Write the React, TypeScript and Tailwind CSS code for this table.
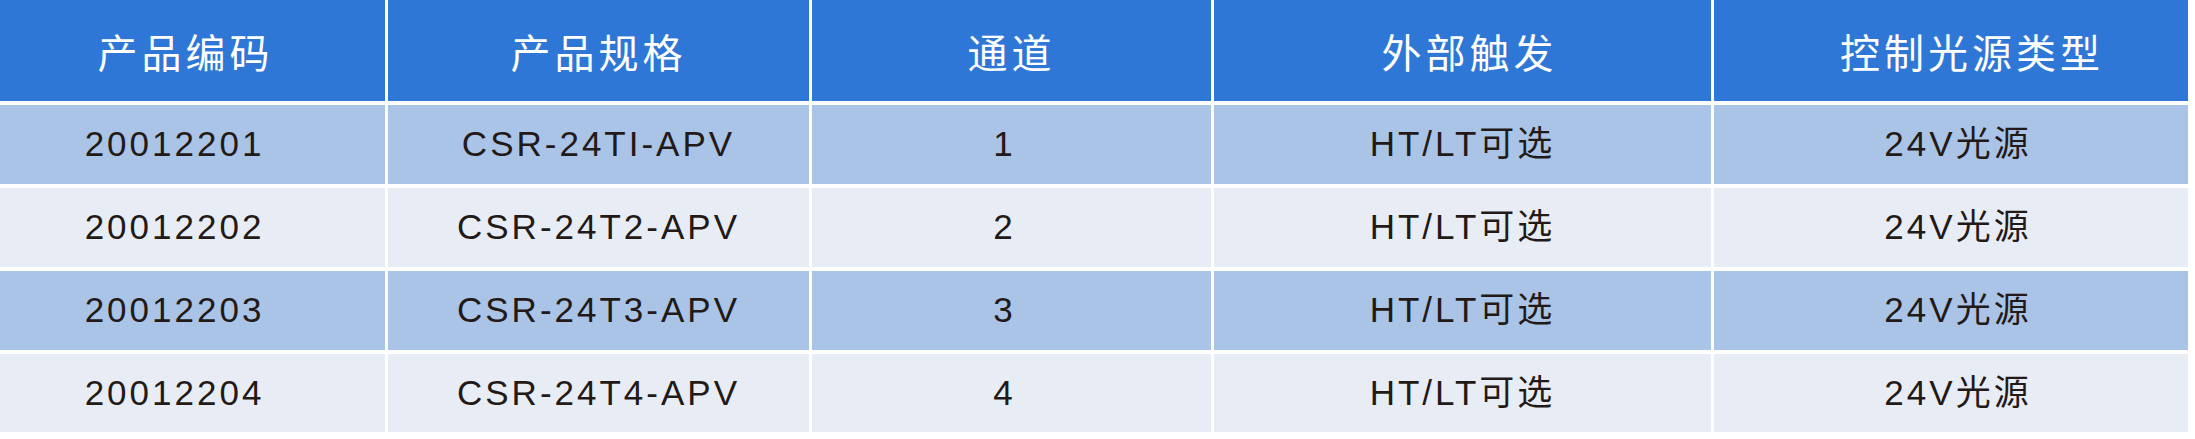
const headers = ["产品编码", "产品规格", "通道", "外部触发", "控制光源类型"];

const rows = [
  ["20012201", "CSR-24TI-APV", "1", "HT/LT可选", "24V光源"],
  ["20012202", "CSR-24T2-APV", "2", "HT/LT可选", "24V光源"],
  ["20012203", "CSR-24T3-APV", "3", "HT/LT可选", "24V光源"],
  ["20012204", "CSR-24T4-APV", "4", "HT/LT可选", "24V光源"],
];

const headPad = ["pr-[14px]", "", "", "pl-[14px]", "pl-[42px]"];
const bodyPad = ["pr-[36px]", "", "pr-[14px]", "", "pl-[14px]"];

export default function App() {
  return (
    <div
      className="w-[2195px] h-[439px] bg-white"
      style={{ fontFamily: '"Liberation Sans", "Noto Sans CJK SC", sans-serif' }}
    >
      <div className="grid grid-cols-[385px_421px_399px_497px_474px] grid-rows-[101px_79px_79px_79px_78px] gap-x-[3px] gap-y-[4px] w-[2188px]">
        {headers.map((h, i) => (
          <div
            key={h}
            className={`flex items-center justify-center bg-[#2e77d6] text-white text-[40px] tracking-[4px] pt-[6px] ${headPad[i]}`}
          >
            {h}
          </div>
        ))}
        {rows.map((row, r) =>
          row.map((cell, c) => (
            <div
              key={`${r}-${c}`}
              className={`flex items-center justify-center text-[35px] tracking-[3px] text-[#231916] ${
                r % 2 === 0 ? "bg-[#a9c4e7]" : "bg-[#e8edf5]"
              } ${bodyPad[c]}`}
            >
              {cell}
            </div>
          ))
        )}
      </div>
    </div>
  );
}
